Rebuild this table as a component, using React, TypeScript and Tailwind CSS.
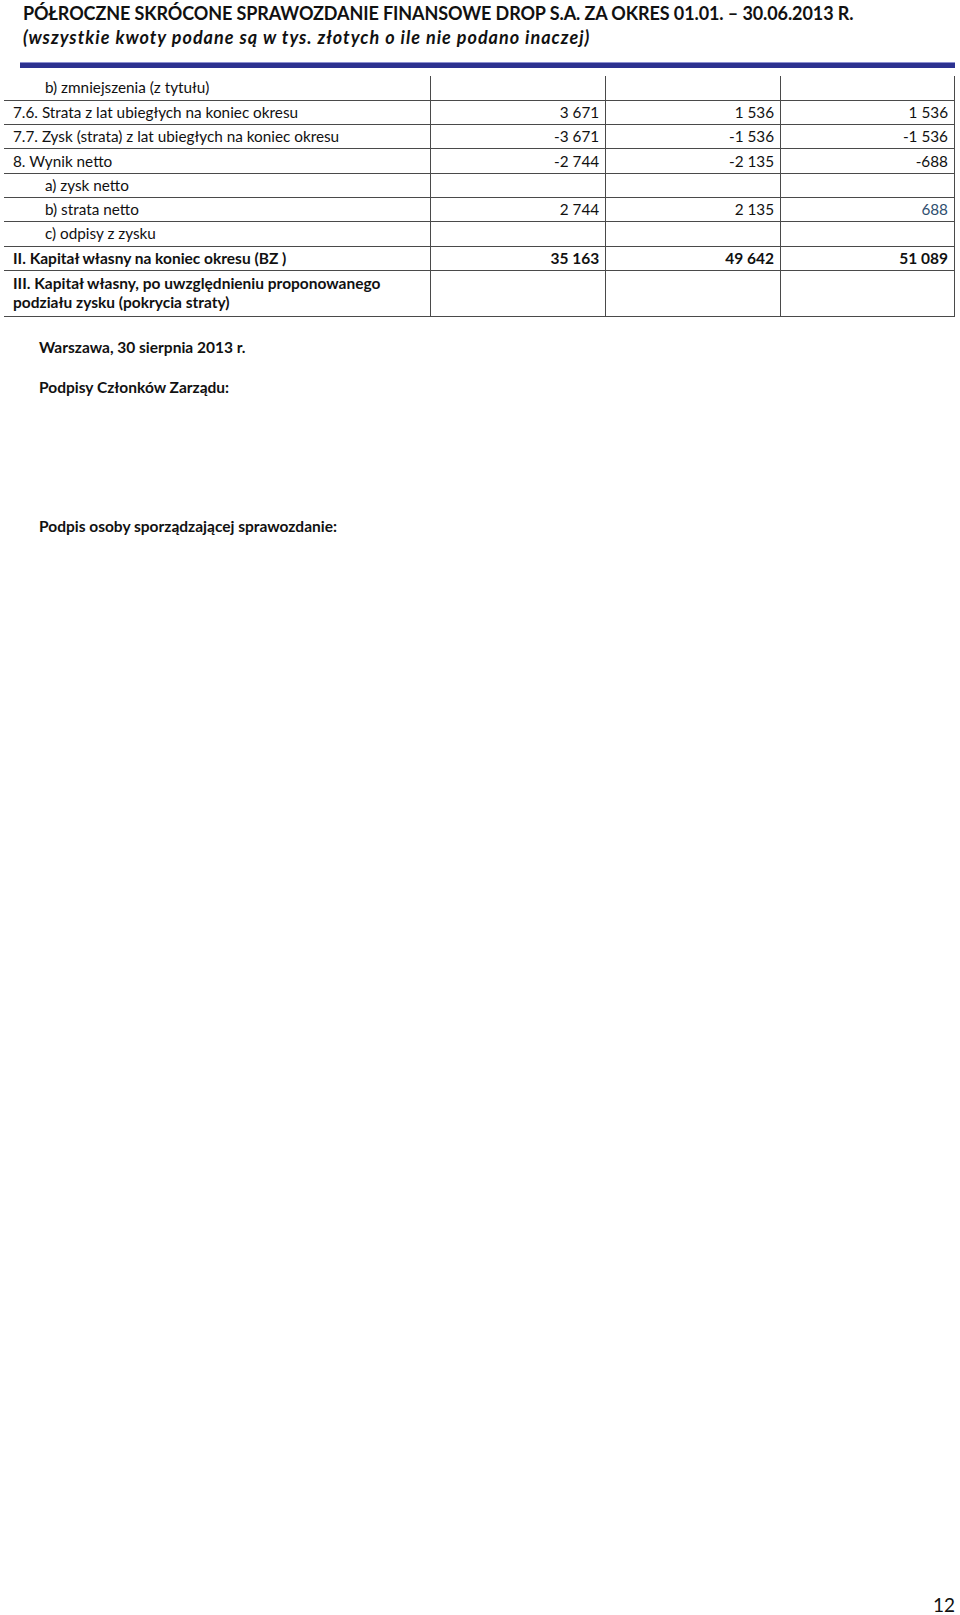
import React from "react";

const F = { fontFamily: "Lato, 'Open Sans', sans-serif" };

type Row = {
  label: React.ReactNode;
  indent?: boolean;
  bold?: boolean;
  vals: string[];
  tall?: boolean;
  blueLast?: boolean;
};

const rows: Row[] = [
  { label: "b) zmniejszenia (z tytułu)", indent: true, vals: ["", "", ""] },
  { label: "7.6. Strata z lat ubiegłych na koniec okresu", vals: ["3 671", "1 536", "1 536"] },
  { label: "7.7. Zysk (strata) z lat ubiegłych na koniec okresu", vals: ["-3 671", "-1 536", "-1 536"] },
  { label: "8. Wynik netto", vals: ["-2 744", "-2 135", "-688"] },
  { label: "a) zysk netto", indent: true, vals: ["", "", ""] },
  { label: "b) strata netto", indent: true, vals: ["2 744", "2 135", "688"], blueLast: true },
  { label: "c) odpisy z zysku", indent: true, vals: ["", "", ""] },
  { label: "II. Kapitał własny na koniec okresu (BZ )", bold: true, vals: ["35 163", "49 642", "51 089"] },
  {
    label: (
      <>
        III. Kapitał własny, po uwzględnieniu proponowanego
        <br />
        podziału zysku (pokrycia straty)
      </>
    ),
    bold: true,
    vals: ["", "", ""],
    tall: true,
  },
];

export default function App() {
  return (
    <div className="w-[960px] h-[1615px] bg-white flex flex-col text-[#111]" style={F}>
      <div className="pl-[23px] pt-[1px]">
        <div className="text-[18px] font-bold leading-[24px] tracking-[-0.1px]">
          PÓŁROCZNE SKRÓCONE SPRAWOZDANIE FINANSOWE DROP S.A. ZA OKRES 01.01. – 30.06.2013 R.
        </div>
        <div className="text-[18px] font-bold italic leading-[24px] tracking-[1px]">
          (wszystkie kwoty podane są w tys. złotych o ile nie podano inaczej)
        </div>
      </div>
      <div className="ml-[20px] mr-[5px] mt-[13px] h-[6px] bg-[#2c3190] border-t border-[#8c8fd0]" />
      <div className="ml-[4px] mt-[8px]">
        <table className="border-collapse text-[15.3px] leading-[19px]" style={{ width: 951 }}>
          <colgroup>
            <col style={{ width: 427 }} />
            <col style={{ width: 175 }} />
            <col style={{ width: 175 }} />
            <col style={{ width: 174 }} />
          </colgroup>
          <tbody>
            {rows.map((r, i) => (
              <tr key={i} className={r.tall ? "h-[46px]" : "h-[24.3px]"}>
                <td
                  className={
                    "border-b border-r border-[#4a4a4a] align-middle " +
                    (r.indent ? "pl-[41px] " : "pl-[9px] ") +
                    (r.bold ? "font-bold text-[15.5px] " : "")
                  }
                >
                  {r.label}
                </td>
                {r.vals.map((v, j) => (
                  <td
                    key={j}
                    className={
                      "border-b border-r border-[#4a4a4a] text-right pr-[6px] align-middle " +
                      (r.bold ? "font-bold text-[15.5px] " : "") +
                      (r.blueLast && j === 2 ? "text-[#2f4f6f]" : "")
                    }
                  >
                    {v}
                  </td>
                ))}
              </tr>
            ))}
          </tbody>
        </table>
      </div>
      <div className="pl-[39px] mt-[21px] text-[15.5px] font-bold leading-[19px]">Warszawa, 30 sierpnia 2013 r.</div>
      <div className="pl-[39px] mt-[21px] text-[15.5px] font-bold leading-[19px]">Podpisy Członków Zarządu:</div>
      <div className="pl-[39px] mt-[120px] text-[15.5px] font-bold leading-[19px]">
        Podpis osoby sporządzającej sprawozdanie:
      </div>
      <div className="flex-1" />
      <div className="flex justify-end pr-[5px] text-[19px] leading-[20px]">12</div>
    </div>
  );
}
